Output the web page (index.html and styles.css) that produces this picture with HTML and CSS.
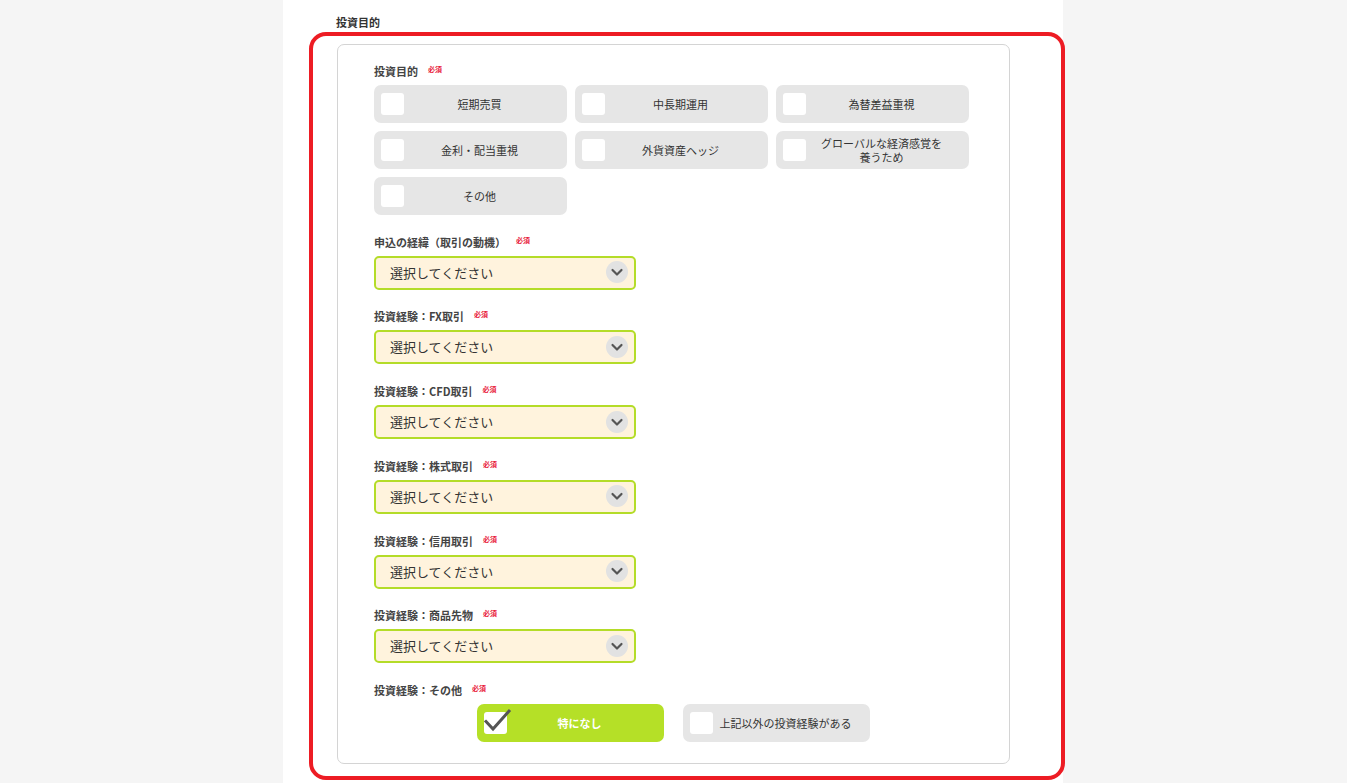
FILE: index.html
```html
<!DOCTYPE html>
<html lang="ja">
<head>
<meta charset="utf-8">
<title>投資目的</title>
<link rel="stylesheet" href="styles.css">
</head>
<body>
<div class="page">
  <div class="section-title">投資目的</div>
  <div class="card">
    <div class="field first">
      <div class="label">投資目的<span class="req">必須</span></div>
      <div class="options">
        <div class="opt"><span class="box"></span><span class="opt-text">短期売買</span></div>
        <div class="opt"><span class="box"></span><span class="opt-text">中長期運用</span></div>
        <div class="opt"><span class="box"></span><span class="opt-text">為替差益重視</span></div>
        <div class="opt"><span class="box"></span><span class="opt-text">金利・配当重視</span></div>
        <div class="opt"><span class="box"></span><span class="opt-text">外貨資産ヘッジ</span></div>
        <div class="opt"><span class="box"></span><span class="opt-text">グローバルな経済感覚を<br>養うため</span></div>
        <div class="opt"><span class="box"></span><span class="opt-text">その他</span></div>
      </div>
    </div>
    <div class="field">
      <div class="label">申込の経緯（取引の動機）<span class="req">必須</span></div>
      <div class="select"><span>選択してください</span><span class="chev"><svg width="20" height="20" viewBox="0 0 20 20"><path d="M5.5 8 L10 12.5 L14.5 8" fill="none" stroke="#555" stroke-width="2.2" stroke-linecap="round" stroke-linejoin="round"/></svg></span></div>
    </div>
    <div class="field">
      <div class="label">投資経験：FX取引<span class="req">必須</span></div>
      <div class="select"><span>選択してください</span><span class="chev"><svg width="20" height="20" viewBox="0 0 20 20"><path d="M5.5 8 L10 12.5 L14.5 8" fill="none" stroke="#555" stroke-width="2.2" stroke-linecap="round" stroke-linejoin="round"/></svg></span></div>
    </div>
    <div class="field">
      <div class="label">投資経験：CFD取引<span class="req">必須</span></div>
      <div class="select"><span>選択してください</span><span class="chev"><svg width="20" height="20" viewBox="0 0 20 20"><path d="M5.5 8 L10 12.5 L14.5 8" fill="none" stroke="#555" stroke-width="2.2" stroke-linecap="round" stroke-linejoin="round"/></svg></span></div>
    </div>
    <div class="field">
      <div class="label">投資経験：株式取引<span class="req">必須</span></div>
      <div class="select"><span>選択してください</span><span class="chev"><svg width="20" height="20" viewBox="0 0 20 20"><path d="M5.5 8 L10 12.5 L14.5 8" fill="none" stroke="#555" stroke-width="2.2" stroke-linecap="round" stroke-linejoin="round"/></svg></span></div>
    </div>
    <div class="field">
      <div class="label">投資経験：信用取引<span class="req">必須</span></div>
      <div class="select"><span>選択してください</span><span class="chev"><svg width="20" height="20" viewBox="0 0 20 20"><path d="M5.5 8 L10 12.5 L14.5 8" fill="none" stroke="#555" stroke-width="2.2" stroke-linecap="round" stroke-linejoin="round"/></svg></span></div>
    </div>
    <div class="field">
      <div class="label">投資経験：商品先物<span class="req">必須</span></div>
      <div class="select"><span>選択してください</span><span class="chev"><svg width="20" height="20" viewBox="0 0 20 20"><path d="M5.5 8 L10 12.5 L14.5 8" fill="none" stroke="#555" stroke-width="2.2" stroke-linecap="round" stroke-linejoin="round"/></svg></span></div>
    </div>
    <div class="field last">
      <div class="label">投資経験：その他<span class="req">必須</span></div>
      <div class="pair">
        <div class="opt checked"><span class="box"><svg class="tick" width="28" height="26" viewBox="0 0 28 26"><path d="M2 13.5 L9 21 L25 3" fill="none" stroke="#555" stroke-width="3" stroke-linecap="square"/></svg></span><span class="opt-text">特になし</span></div>
        <div class="opt"><span class="box"></span><span class="opt-text">上記以外の投資経験がある</span></div>
      </div>
    </div>
  </div>
  <div class="highlight"></div>
</div>
</body>
</html>
```

FILE: styles.css
```css
* { box-sizing: border-box; }
html, body { margin: 0; padding: 0; }
body {
  background: #f5f5f5;
  font-family: "Noto Sans CJK JP", "Noto Sans", sans-serif;
  color: #333;
}
.page {
  position: relative;
  width: 780px;
  min-height: 783px;
  margin-left: 283px;
  background: #fff;
  padding-top: 14px;
}
.section-title {
  margin-left: 53px;
  font-size: 11px;
  font-weight: bold;
  line-height: 16px;
  color: #333;
}
.card {
  margin-top: 14px;
  margin-left: 54px;
  width: 673px;
  border: 1px solid #d4d4d4;
  border-radius: 7px;
  padding: 19px 40px 21px 36px;
}
.field { margin-bottom: 19.75px; }
.field.first { margin-bottom: 19.5px; }
.field.last { margin-bottom: 0; }
.label {
  display: flex;
  align-items: center;
  height: 14px;
  font-size: 11px;
  font-weight: bold;
  color: #444;
  margin-bottom: 7px;
}
.req {
  color: #e8203a;
  font-size: 7px;
  font-weight: bold;
  margin-left: 10px;
  position: relative;
  top: -2px;
}
.options {
  display: grid;
  grid-template-columns: repeat(3, 193px);
  gap: 8px;
}
.opt {
  position: relative;
  height: 38px;
  background: #e6e6e6;
  border-radius: 7px;
  display: flex;
  align-items: center;
  padding-left: 7px;
}
.box {
  position: relative;
  width: 23px;
  height: 22px;
  background: #fff;
  border-radius: 3px;
  flex: none;
}
.opt-text {
  flex: 1;
  text-align: center;
  font-size: 11px;
  line-height: 14px;
  color: #333;
  padding-right: 12px;
}
.select {
  width: 262px;
  height: 34px;
  border: 2px solid #b4dc28;
  border-radius: 5px;
  background: #fff3dd;
  display: flex;
  align-items: center;
  justify-content: space-between;
  padding: 0 6px 1px 14px;
  font-size: 13px;
  color: #333;
}
.chev {
  width: 22px;
  height: 22px;
  border-radius: 50%;
  background: #e2e2e2;
  display: flex;
  align-items: center;
  justify-content: center;
}
.pair {
  display: flex;
  justify-content: center;
  gap: 19px;
  padding-left: 4px;
}
.pair .opt { width: 187px; }
.opt.checked { background: #b5e027; }
.opt.checked .opt-text { color: #fff; font-weight: bold; }
.tick {
  position: absolute;
  left: 0;
  top: -4px;
}
.highlight {
  position: absolute;
  left: 26px;
  top: 32px;
  width: 756px;
  height: 748px;
  border: 4px solid #ed1c24;
  border-radius: 17px;
  pointer-events: none;
}
```
